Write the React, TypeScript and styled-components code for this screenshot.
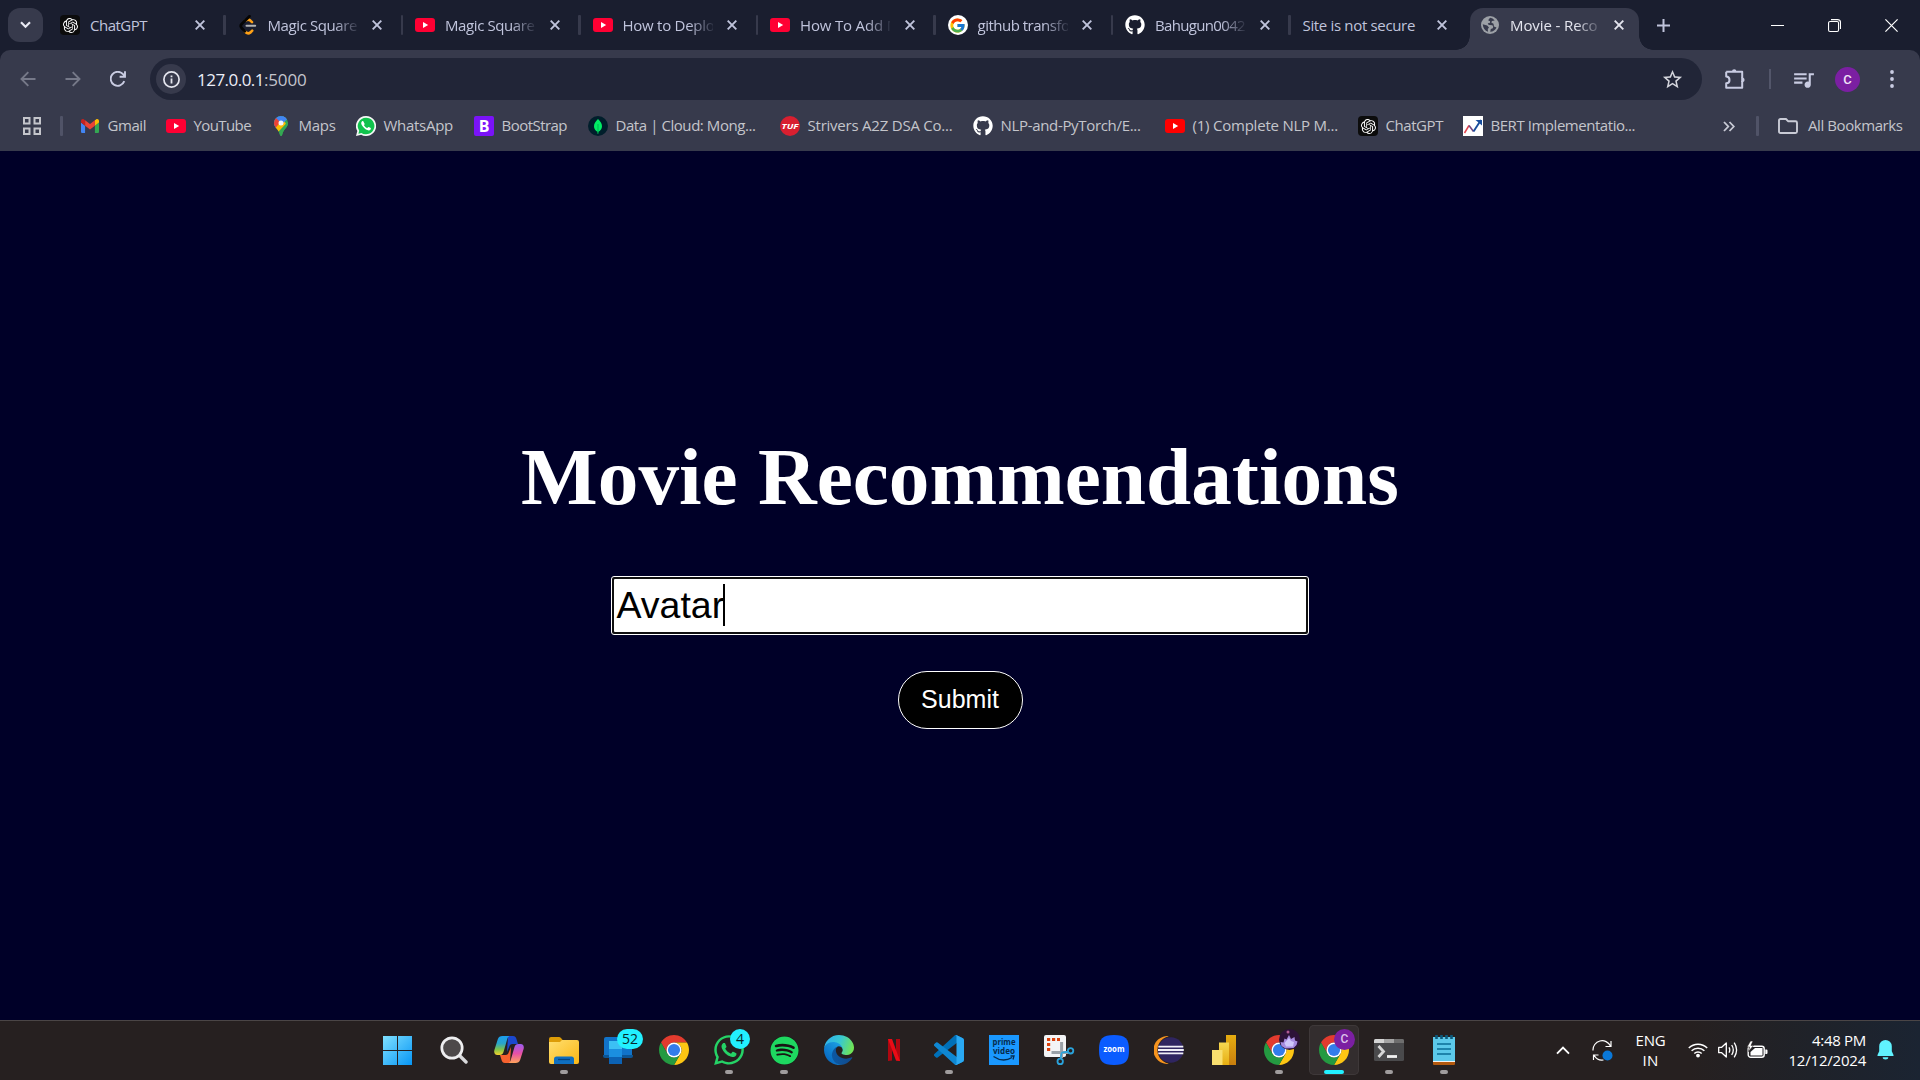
import React, { useLayoutEffect, useRef, useState } from "react";
import styled, { createGlobalStyle, css } from "styled-components";
import { SiOpenai } from "react-icons/si";
import { FaGithub, FaSpotify, FaWhatsapp } from "react-icons/fa";
import { FcGoogle } from "react-icons/fc";
import { MdQueueMusic, MdStarBorder } from "react-icons/md";

const c = {
  frame: "#1a1e2f",
  toolbar: "#373a4c",
  omnibox: "#212537",
  tabText: "#c0c4dc",
  mark: "#c4c5cb",
  page: "#000028",
  taskbar: "#262020",
  cyan: "#22f0ff",
};
const ui = `"Segoe UI", "Open Sans", "Noto Sans", sans-serif`;

const GlobalStyle = createGlobalStyle`
  *, *::before, *::after { box-sizing: border-box; }
  html, body { margin: 0; padding: 0; background: ${c.page}; overflow: hidden; }
  svg { display: block; flex: none; }
`;

/* ---------- text that spreads to a given advance width ---------- */

const Fitted = styled.span`
  display: inline-block;
  white-space: pre;
`;

function FitText({ children, width }: { children: string; width: number }) {
  const ref = useRef<HTMLSpanElement>(null);
  const [spacing, setSpacing] = useState(0);
  useLayoutEffect(() => {
    if (!ref.current) return;
    const natural = ref.current.getBoundingClientRect().width;
    setSpacing((width - natural) / children.length);
  }, [children, width]);
  return (
    <Fitted ref={ref} style={{ letterSpacing: spacing }}>
      {children}
    </Fitted>
  );
}

/* ---------- layout ---------- */

const Screen = styled.div`
  width: 1920px;
  height: 1080px;
  display: flex;
  flex-direction: column;
  font-family: ${ui};
  font-size: 15px;
  overflow: hidden;
`;

const TabStrip = styled.div`
  height: 50px;
  flex: none;
  display: flex;
  align-items: flex-end;
  background: ${c.frame};
  padding-left: 8px;
`;

const TabSearch = styled.button`
  width: 35px;
  height: 34px;
  margin: 0 4px 8px 0;
  padding: 0;
  border: 0;
  border-radius: 12px;
  background: ${c.toolbar};
  display: grid;
  place-items: center;
`;

const Tab = styled.div<{ $active?: boolean }>`
  position: relative;
  width: 177.5px;
  height: 42px;
  flex: none;
  display: flex;
  align-items: center;
  padding: 0 0 8px 13px;
  color: ${(p) => (p.$active ? "#e4e5ee" : c.tabText)};
  ${(p) =>
    p.$active
      ? css`
          width: 168.5px;
          margin-left: 3px;
          padding-left: 10px;
          background: ${c.toolbar};
          border-radius: 13px 13px 0 0;
          &::before,
          &::after {
            content: "";
            position: absolute;
            bottom: 0;
            width: 14px;
            height: 14px;
          }
          &::before {
            left: -14px;
            background: radial-gradient(circle at 0 0, transparent 13.5px, ${c.toolbar} 14px);
          }
          &::after {
            right: -14px;
            background: radial-gradient(circle at 100% 0, transparent 13.5px, ${c.toolbar} 14px);
          }
        `
      : ""}
`;

const Favicon = styled.div`
  width: 20px;
  height: 20px;
  margin-right: 10px;
  flex: none;
  display: grid;
  place-items: center;
`;

const TabTitle = styled.div<{ $wide?: boolean; $fade?: boolean }>`
  width: ${(p) => (p.$wide ? 120 : 90)}px;
  overflow: hidden;
  line-height: 22px;
  white-space: nowrap;
  ${(p) => p.$fade && css`mask-image: linear-gradient(90deg, #000 66px, rgba(0, 0, 0, 0.1) 90px);`}
`;

const TabClose = styled.div<{ $shift?: boolean }>`
  width: 14px;
  margin-left: ${(p) => (p.$shift ? 11.5 : 12.5)}px;
  display: grid;
  place-items: center;
`;

const TabDivider = styled.div`
  width: 2.5px;
  height: 20px;
  margin: 0 -1px 0 auto;
  border-radius: 1px;
  background: ${c.toolbar};
`;

const NewTab = styled.div`
  width: 50px;
  height: 50px;
  display: grid;
  place-items: center;
`;

const WindowControls = styled.div`
  margin-left: auto;
  display: flex;
  height: 50px;
  align-items: center;
`;

const WindowButton = styled.div`
  width: 57px;
  height: 49px;
  display: grid;
  place-items: center;
`;

const FrameBack = styled.div`
  background: ${c.frame};
  flex: none;
`;

const Chrome = styled.div`
  height: 101px;
  background: ${c.toolbar};
  border-radius: 10px 10px 0 0;
  display: flex;
  flex-direction: column;
  padding-top: 8px;
`;

const Toolbar = styled.div`
  height: 42px;
  display: flex;
  align-items: center;
  padding-left: 5px;
`;

const ToolButton = styled.div<{ $w?: number }>`
  width: ${(p) => p.$w ?? 45}px;
  height: 42px;
  flex: none;
  display: grid;
  place-items: center;
`;

const Omnibox = styled.div`
  width: 1552px;
  height: 42px;
  flex: none;
  margin-left: 10px;
  border-radius: 21px;
  background: ${c.omnibox};
  display: flex;
  align-items: center;
  padding: 0 15px 0 6px;
`;

const SiteInfo = styled.div`
  width: 30px;
  height: 30px;
  border-radius: 50%;
  background: ${c.toolbar};
  display: grid;
  place-items: center;
  margin-right: 11px;
`;

const Url = styled.div`
  font-size: 17px;
  line-height: 24px;
  color: #eceef8;
  margin-right: auto;
  padding-top: 1px;
`;
const Port = styled.span`
  color: #c3c4cc;
`;

const ToolDivider = styled.div`
  width: 2px;
  height: 20px;
  flex: none;
  background: #53566a;
`;

const Profile = styled.div`
  width: 25px;
  height: 25px;
  border-radius: 50%;
  background: #7b1fa2;
  color: #f2e4f7;
  font: 500 13px/25px Roboto, sans-serif;
  text-align: center;
`;

const BookmarkBar = styled.div`
  height: 51px;
  display: flex;
  align-items: center;
  padding: 1px 0 0 22px;
  color: ${c.mark};
`;

const BarDivider = styled.div`
  width: 2.5px;
  height: 20px;
  border-radius: 1px;
  background: #505367;
`;

const Bookmark = styled.div<{ $w: number }>`
  width: ${(p) => p.$w}px;
  height: 20px;
  flex: none;
  display: flex;
  align-items: center;
  gap: 7.5px;
  line-height: 20px;
`;

const BookmarkName = styled.div`
  padding-bottom: 2px;
`;

const BookmarkIcon = styled.div`
  width: 20px;
  height: 20px;
  flex: none;
  display: grid;
  place-items: center;
`;

const Disc = styled.div<{ $bg: string; $r?: string }>`
  width: 20px;
  height: 20px;
  border-radius: ${(p) => p.$r ?? "50%"};
  background: ${(p) => p.$bg};
  color: #fff;
  display: grid;
  place-items: center;
`;

const AllBookmarks = styled.div`
  margin-left: auto;
  display: flex;
  align-items: center;
  padding-right: 17.5px;
  line-height: 20px;
`;

const Page = styled.main`
  height: 869px;
  flex: none;
  background: ${c.page};
  display: flex;
  flex-direction: column;
  align-items: center;
`;

const Heading = styled.h1`
  margin: 278.7px 0 0;
  font: bold 81.25px/94px "Times New Roman", "Liberation Serif", serif;
  color: #fff;
  white-space: nowrap;
`;

const Query = styled.div`
  width: 698px;
  height: 59px;
  margin-top: 52.3px;
  border: 1px solid #fff;
  border-radius: 3px;
  background: #101010;
  padding: 2px;
  display: flex;
`;

const QueryText = styled.div`
  flex: 1;
  border-radius: 1px;
  background: #fff;
  color: #000;
  font: 37.5px/42px Arial, "Liberation Sans", sans-serif;
  padding-left: 2.5px;
  display: flex;
  align-items: center;
`;

const Caret = styled.span`
  width: 2px;
  height: 42px;
  margin-left: -1px;
  background: #000;
`;

const Submit = styled.button`
  width: 125px;
  height: 58px;
  margin: 36px 0 0 1px;
  padding: 0 1px 2px 0;
  border: 1px solid #fff;
  border-radius: 31px;
  background: #000;
  color: #fff;
  font: 25px/54px Arial, "Liberation Sans", sans-serif;
`;

const Taskbar = styled.footer`
  height: 60px;
  flex: none;
  border-top: 1px solid #4a4546;
  background: linear-gradient(90deg, ${c.taskbar} 0 1690px, #1f2229 1810px, #1b2432 1920px);
  display: flex;
  align-items: flex-start;
  padding-left: 371.5px;
  color: #fff;
`;

const TaskCell = styled.div`
  width: 55px;
  height: 58px;
  flex: none;
  display: grid;
  place-items: center;
`;

const TaskItem = styled.div<{ $active?: boolean }>`
  position: relative;
  width: 50px;
  height: 50px;
  border-radius: 5px;
  display: grid;
  place-items: center;
  ${(p) =>
    p.$active &&
    css`
      background: #332d2e;
      box-shadow: inset 0 0 0 1px #3e3839;
    `}
`;

const Running = styled.div<{ $active?: boolean }>`
  position: absolute;
  bottom: 1px;
  left: 50%;
  width: ${(p) => (p.$active ? 20 : 8)}px;
  height: 4px;
  border-radius: 2px;
  transform: translateX(-50%);
  background: ${(p) => (p.$active ? c.cyan : "#a09c9d")};
`;

const Count = styled.div<{ $w: number; $right: number }>`
  position: absolute;
  top: 4px;
  right: ${(p) => p.$right}px;
  width: ${(p) => p.$w}px;
  height: 20px;
  border-radius: 10px;
  background: ${c.cyan};
  color: #06282c;
  font-size: 14px;
  line-height: 20px;
  text-align: center;
`;

const Badge = styled.div<{ $bg: string }>`
  position: absolute;
  top: 4px;
  right: 4px;
  width: 21px;
  height: 21px;
  border-radius: 50%;
  background: ${(p) => p.$bg};
  color: #dcc2ea;
  font: 500 12px/21px Roboto, sans-serif;
  text-align: center;
`;

const Tray = styled.div`
  margin-left: auto;
  height: 58px;
  display: flex;
  align-items: center;
`;

const TraySlot = styled.div<{ $w: number }>`
  width: ${(p) => p.$w}px;
  display: grid;
  place-items: center;
`;

const Lines = styled.div<{ $w: number; $align: string }>`
  width: ${(p) => p.$w}px;
  line-height: 20px;
  padding-bottom: 1px;
  display: flex;
  flex-direction: column;
  align-items: ${(p) => p.$align};
`;

/* ---------- icons ---------- */

const YouTube = ({ fill = "#ff0033" }: { fill?: string }) => (
  <svg width="20" height="14" viewBox="0 0 20 14">
    <rect width="20" height="14" rx="3" fill={fill} />
    <path d="M8 4l5.2 3L8 10z" fill="#fff" />
  </svg>
);

const OpenAI = () => (
  <Disc $bg="#0c0c0c" $r="4px">
    <SiOpenai size={15} />
  </Disc>
);

const LeetCode = () => (
  <svg width="18" height="20" viewBox="0 0 18 20" fill="none" strokeLinecap="round">
    <path d="M6.800 5.400q2.400-1.700 4.600.2l1.600 1.500M5.800 16.400q2.800 3.200 5.700 1l1.700-1.700" stroke="#ffa116" strokeWidth="2.600" />
    <path d="M10.500 1.200L2.500 9.300q-1.600 1.700 0 3.400l3.300 3.600" stroke="#050505" strokeWidth="2.700" />
    <path d="M7.500 10.800h8.700" stroke="#b3b3b3" strokeWidth="2" />
  </svg>
);

const Google = () => (
  <Disc $bg="#fff">
    <FcGoogle size={17} />
  </Disc>
);

const Globe = () => (
  <svg width="18" height="18" viewBox="0 0 18 18">
    <circle cx="9" cy="9" r="9" fill="#9ca0a6" />
    <path d="M9.300 1.800q-1.800 1-2 2.800l1.800.6-.3 1.800-2 .3q0 1.400 1.600 1.700l3 .2q1.500 1.300.4 3l-2 .8-.6 2.800q4.500-.6 6.300-4.400l-2.500-1-.5-2.600-2.200-1.300.7-1.600 2.700-.5q-2-2.400-4.400-2.600z" fill={c.toolbar} />
    <path d="M1.700 8.200l4.500 1.200 1.800 2-1.200 1.500.2 2.900Q2.300 14 1.700 8.200z" fill={c.toolbar} />
  </svg>
);

const Cross = ({ color = c.tabText }: { color?: string }) => (
  <svg width="10" height="10" viewBox="0 0 10 10" stroke={color} strokeWidth="1.9">
    <path d="M.7.7l8.6 8.6M9.3.7L.7 9.3" />
  </svg>
);

const Gmail = () => (
  <svg width="18" height="14" viewBox="52 42 88 66" preserveAspectRatio="none">
    <path fill="#4285f4" d="M58 108h14V74L52 59v43c0 3.32 2.69 6 6 6" />
    <path fill="#34a853" d="M120 108h14c3.32 0 6-2.69 6-6V59l-20 15" />
    <path fill="#fbbc04" d="M120 48v26l20-15v-8c0-7.42-8.47-11.65-14.4-7.2" />
    <path fill="#ea4335" d="M72 74V48l24 18 24-18v26L96 92" />
    <path fill="#c5221f" d="M52 51v8l20 15V48l-5.6-4.2c-5.94-4.45-14.4-.22-14.4 7.2" />
  </svg>
);

const Maps = () => (
  <svg width="14" height="20" viewBox="0 0 14 20">
    <clipPath id="pin">
      <path d="M7 0a7 7 0 0 1 7 7c0 4-3.4 5.600-5 9.200-.7 1.600-.8 3.800-2 3.800s-1.300-2.200-2-3.800C3.400 12.600 0 11 0 7a7 7 0 0 1 7-7z" />
    </clipPath>
    <g clipPath="url(#pin)">
      <path d="M0 0h14v20H0z" fill="#34a853" />
      <path d="M0 14L12.500 1 7 0H0z" fill="#4285f4" />
      <path d="M0 3.200L2 2l5 4.800L1 13 0 10z" fill="#ea4335" />
      <path d="M1 12.400L9.200 3 12 8 4 16z" fill="#fbbc04" />
      <path d="M14 5.500L4.500 16.500 7 20h7z" fill="#34a853" />
      <path d="M4.600 4.400L9.500-1l4 4-4.500 4z" fill="#4285f4" />
    </g>
    <circle cx="7" cy="7" r="2.500" fill="#f4f6fb" />
  </svg>
);

const WhatsAppMark = () => (
  <svg width="20" height="20" viewBox="0 0 20 20">
    <path d="M10 0a10 10 0 1 1-4.800 18.700L0 20l1.300-5A10 10 0 0 1 10 0z" fill="#f4f7f5" />
    <path d="M10 1.700a8.300 8.300 0 1 1-4.500 15.200l-3.100.8.800-3A8.300 8.300 0 0 1 10 1.700z" fill="#10c24c" />
    <path d="M7.300 5.300c-.5-.5-1.300-.3-1.800.6-.6 1.100-.3 2.700 1.500 4.900 1.900 2.300 4.200 3.700 5.900 3.600 1.200-.1 2-1 2-1.900 0-.4-1.900-1.500-2.400-1.400-.5.100-.9 1.100-1.300 1-.9-.2-2.800-1.900-3.200-2.900-.1-.4.700-.9.700-1.300z" fill="#fff" />
  </svg>
);

const Mongo = () => (
  <Disc $bg="#001e2b">
    <svg width="8" height="15" viewBox="0 0 8 15">
      <path d="M4 0c2.300 2.700 4 4.300 4 7.200 0 2.600-1.500 4.200-3.500 5.600L4.200 15h-.5l-.3-2.200C1.400 11.400 0 9.800 0 7.200 0 4.300 1.700 2.700 4 0z" fill="#00ed64" />
      <path d="M4 5v8" stroke="#00984a" strokeWidth=".7" />
    </svg>
  </Disc>
);

const Trend = () => (
  <Disc $bg="#fff" $r="0">
    <svg width="20" height="20" viewBox="0 0 20 20" fill="none">
      <path d="M1.500 17L6 9.500" stroke="#e2444d" strokeWidth="1.500" />
      <path d="M6 9.500l4.500 6" stroke="#70457e" strokeWidth="1.500" />
      <path d="M10.500 15.500L18 4" stroke="#184d9c" strokeWidth="1.900" />
      <path d="M12.500 4H19v5.500z" fill="#184d9c" />
    </svg>
  </Disc>
);

const MicroText = styled.text`
  font-family: "Open Sans", "Noto Sans", sans-serif;
  font-weight: 700;
  text-anchor: middle;
`;

const Tuf = () => (
  <svg width="20" height="20" viewBox="0 0 20 20">
    <circle cx="10" cy="10" r="10" fill="#d81f30" />
    <MicroText x="10" y="12.500" fontSize="7.500" fontStyle="italic" fill="#fff" textLength="17" lengthAdjust="spacingAndGlyphs">
      TUF
    </MicroText>
  </svg>
);

const Bootstrap = () => (
  <svg width="20" height="20" viewBox="0 0 20 20">
    <rect width="20" height="20" rx="2" fill="#7a13f8" />
    <MicroText x="10" y="15.500" fontSize="16" fill="#fff">
      B
    </MicroText>
  </svg>
);

const ChromeLogo = () => (
  <svg width="30" height="30" viewBox="0 0 48 48">
    <path fill="#e33b2e" d="M24 0C15.100 0 7.360 4.830 3.215 12L13.607 30A11.980 11.980 0 0 1 12 24 12 12 0 0 1 24 12h20.785C40.630 4.830 32.880 0 24 0Z" />
    <path fill="#fdc613" d="M44.780 12H24a12 12 0 0 1 10.392 18L24 48c13.250 0 24-10.740 24-24 0-4.370-1.170-8.470-3.220-12Z" />
    <path fill="#249a41" d="M3.215 12C1.170 15.530 0 19.630 0 24c0 13.250 10.740 24 24 24L34.390 30A12 12 0 0 1 13.607 30Z" />
    <circle cx="24" cy="24" r="12" fill="#fff" />
    <circle cx="24" cy="24" r="9.700" fill="#327ceb" />
  </svg>
);

const WindowsLogo = () => (
  <svg width="32" height="29" viewBox="0 0 32 29">
    <defs>
      <linearGradient id="win" x1="0" y1="0" x2="1" y2="1">
        <stop offset="0" stopColor="#7fe0ff" />
        <stop offset="1" stopColor="#0796f5" />
      </linearGradient>
    </defs>
    <path fill="url(#win)" d="M0 0h14v14H0zM15 0h14v14H15zM0 15h14v14H0zM15 15h14v14H15z" />
  </svg>
);

const SearchIcon = () => (
  <svg width="28" height="28" viewBox="0 0 28 28">
    <path d="M18 18l8 8" stroke="#d9d9dc" strokeWidth="3.400" strokeLinecap="round" />
    <circle cx="12" cy="12" r="10.200" fill="#4d494a" stroke="#eeeef0" strokeWidth="2.700" />
  </svg>
);

const Copilot = () => (
  <svg width="30" height="28" viewBox="0 0 30 28">
    <defs>
      <linearGradient id="cpA" x1="0" y1="0" x2="0" y2="1">
        <stop offset="0" stopColor="#1a9df0" />
        <stop offset=".4" stopColor="#2aa6c8" />
        <stop offset=".7" stopColor="#7dc34a" />
        <stop offset="1" stopColor="#f3d02c" />
      </linearGradient>
      <linearGradient id="cpB" x1="0" y1="0" x2="0" y2="1">
        <stop offset="0" stopColor="#9a5cf0" />
        <stop offset=".5" stopColor="#e850a6" />
        <stop offset="1" stopColor="#ffa45c" />
      </linearGradient>
    </defs>
    <path d="M14 0h5c2.300 0 3 1.500 3.600 3.500L24 8h-5.500c-2 0-2.800 1-3.400 3L13 16z" fill="#1b48ce" />
    <path d="M16 27h-5c-2.300 0-3-1.500-3.600-3.500L6 19h5.500c2 0 2.800-1 3.400-3L17 11z" fill="#f6612e" />
    <path d="M8.500 0h8c-2 0-2.800 1.500-3.300 3.300L9.800 15c-.7 2.600-1.600 4-4.300 4H3.400C.6 19-.3 16.500.4 14L3.800 3.300C4.600 1 6 0 8.500 0z" fill="url(#cpA)" />
    <path d="M21.500 27h-8c2 0 2.800-1.500 3.300-3.300L20.200 12c.7-2.600 1.600-4 4.300-4h2.100c2.800 0 3.700 2.500 3 5l-3.400 10.700C25.400 26 24 27 21.500 27z" fill="url(#cpB)" />
  </svg>
);

const Explorer = () => (
  <svg width="30" height="27" viewBox="0 0 30 27">
    <defs>
      <linearGradient id="fold" x1="0" y1="0" x2="1" y2="1">
        <stop offset="0" stopColor="#ffdf70" />
        <stop offset="1" stopColor="#fbb714" />
      </linearGradient>
    </defs>
    <path d="M0 2q0-2 2-2h8q1 0 2 1l2 2.500V8H0z" fill="#dd9c07" />
    <path d="M0 5h11l2-2h15q2 0 2 2v20q0 2-2 2H2q-2 0-2-2z" fill="url(#fold)" />
    <path d="M5 27v-5q0-2.500 2.500-2.500h15Q25 19.500 25 22v5z" fill="#0f6fc0" />
    <path d="M9 22.500h12" stroke="#07457e" strokeWidth="1.300" />
  </svg>
);

const PhoneLink = () => (
  <svg width="32" height="28" viewBox="0 0 32 28">
    <path d="M3 1h24q2 0 2 2v16H1V3q0-2 2-2z" fill="#1173c9" />
    <path d="M0 19h30v1q0 2-2 2H2q-2 0-2-2z" fill="#0c5595" />
    <path d="M6 5h13v8H6z" fill="#3cc0f4" />
    <path d="M6 13h13v8H6z" fill="#1b8fe0" />
    <path d="M6 21h13v7H6z" fill="#0c62b4" />
  </svg>
);

const Edge = () => (
  <svg width="30" height="30" viewBox="0 0 256 256">
    <defs>
      <linearGradient id="edA" x1="63" y1="177" x2="242" y2="177" gradientUnits="userSpaceOnUse">
        <stop offset="0" stopColor="#0c59a4" />
        <stop offset="1" stopColor="#114a8b" />
      </linearGradient>
      <linearGradient id="edB" x1="157" y1="100" x2="46" y2="221" gradientUnits="userSpaceOnUse">
        <stop offset="0" stopColor="#1b9de2" />
        <stop offset=".6" stopColor="#0f7fd0" />
        <stop offset="1" stopColor="#0a6cc2" />
      </linearGradient>
      <linearGradient id="edC" x1="20" y1="40" x2="240" y2="120" gradientUnits="userSpaceOnUse">
        <stop offset="0" stopColor="#2fb3ea" />
        <stop offset=".5" stopColor="#38c8d0" />
        <stop offset="1" stopColor="#70e456" />
      </linearGradient>
    </defs>
    <path fill="url(#edA)" d="M235.680 190.460a93.730 93.730 0 0 1-10.540 4.710 101.870 101.870 0 0 1-35.900 6.460c-47.320 0-88.540-32.550-88.540-74.320A31.480 31.480 0 0 1 117.130 100.030c-42.800 1.800-53.800 46.400-53.800 72.530 0 73.880 68.090 81.370 82.760 81.370 7.910 0 19.840-2.300 27-4.560l1.310-.44a128.340 128.340 0 0 0 66.600-52.800 4 4 0 0 0-5.320-5.670z" />
    <path fill="url(#edB)" d="M105.730 241.420A79.200 79.200 0 0 1 83 220.100a80.720 80.720 0 0 1 29.530-120c3.120-1.470 8.450-4.130 15.540-4a32.350 32.350 0 0 1 25.690 13 31.880 31.880 0 0 1 6.360 18.660c0-.21 24.460-79.600-80-79.600-43.900 0-80 41.660-80 78.210a130.150 130.150 0 0 0 12.110 56 128 128 0 0 0 156.380 67.110 75.550 75.550 0 0 1-62.780-8z" />
    <path fill="url(#edC)" d="M152.330 148.860c-.81 1.050-3.300 2.500-3.300 5.660 0 2.610 1.700 5.120 4.720 7.230 14.380 10 41.490 8.680 41.560 8.680a59.560 59.560 0 0 0 30.270-8.350A61.380 61.380 0 0 0 256 109.190c.26-22.410-8-37.310-11.340-43.910C223.460 23.840 177.720 0 128 0A128 128 0 0 0 0 126.200c.48-36.540 36.800-66.050 80-66.050 3.500 0 23.460.34 42 10.070 16.340 8.580 24.900 18.940 30.850 29.210 6.180 10.670 7.280 24.150 7.280 29.520s-2.740 13.330-7.800 19.910z" />
  </svg>
);

const Netflix = () => (
  <svg width="12" height="22" viewBox="0 0 12 22">
    <path d="M0 0h4v21.500l-4 .5zM8 0h4v22l-4-.5z" fill="#b00710" />
    <path d="M0 0h4l8 22-4-.5z" fill="#ec0b16" />
  </svg>
);

const VSCode = () => (
  <svg width="30" height="30" viewBox="0 0 100 100">
    <path d="M96.500 10.700L75.900.8a6.200 6.200 0 0 0-7.100 1.200L1.300 63.500a4.200 4.200 0 0 0 0 6.200l5.500 5a4.200 4.200 0 0 0 5.400.2l81.200-61.600c2.700-2 6.600-.1 6.600 3.300v-.2a6.300 6.300 0 0 0-3.500-5.700z" fill="#0070b8" />
    <path d="M96.500 89.300l-20.600 9.900a6.200 6.200 0 0 1-7.100-1.200L1.300 36.500a4.200 4.200 0 0 1 0-6.200l5.500-5a4.200 4.200 0 0 1 5.400-.2l81.200 61.600c2.700 2 6.600.1 6.600-3.300v.2a6.300 6.300 0 0 1-3.500 5.700z" fill="#0f87d2" />
    <path d="M75.900 99.100a6.200 6.200 0 0 1-7.100-1.200c2.300 2.300 6.200.7 6.200-2.600V4.700c0-3.300-3.900-4.900-6.200-2.600A6.200 6.200 0 0 1 75.900.9l20.600 9.900a6.200 6.200 0 0 1 3.500 5.600v67.200a6.200 6.200 0 0 1-3.500 5.600z" fill="#2aa9f3" />
  </svg>
);

const PrimeVideo = () => (
  <svg width="30" height="30" viewBox="0 0 30 30">
    <rect width="30" height="30" fill="#1a98ff" />
    <MicroText x="15" y="9.500" fontSize="8.200" fill="#062b4d" textLength="23" lengthAdjust="spacingAndGlyphs">
      prime
    </MicroText>
    <MicroText x="15" y="19" fontSize="8.200" fill="#062b4d" textLength="22" lengthAdjust="spacingAndGlyphs">
      video
    </MicroText>
    <path d="M4.500 21.500q9.500 6.500 18.500 1M21.500 21h3.500l-1 3.500" fill="none" stroke="#062b4d" strokeWidth="1.300" />
  </svg>
);

const Snip = () => (
  <svg width="31" height="30" viewBox="0 0 31 30">
    <rect width="22" height="22" rx="2" fill="#f3f4f6" />
    <path d="M3 3h3.200v3H3zM8 3h3.200v3H8zM13 3h3v3h-3zM3 8h3.200v3H3zM3 13h3.200v3H3z" fill="#d9400b" />
    <path d="M17.600 7v16M7.500 17.600h17" stroke="#9aa1a8" strokeWidth="3" fill="none" />
    <path d="M17.600 17.600l-1 6M17.600 17.600l7-1" stroke="#2aa3dc" strokeWidth="1.600" />
    <circle cx="26.600" cy="15.800" r="2.700" fill="none" stroke="#2aa3dc" strokeWidth="1.800" />
    <circle cx="16.200" cy="26.400" r="2.700" fill="none" stroke="#2aa3dc" strokeWidth="1.800" />
  </svg>
);

const Zoom = () => (
  <svg width="30" height="30" viewBox="0 0 30 30">
    <path d="M15 0c11.500 0 15 3.500 15 15s-3.500 15-15 15S0 26.500 0 15 3.500 0 15 0z" fill="#0b5cff" />
    <MicroText x="15" y="17.200" fontSize="8" fill="#fff" textLength="21" lengthAdjust="spacingAndGlyphs">
      zoom
    </MicroText>
  </svg>
);

const Eclipse = () => (
  <svg width="30" height="28" viewBox="0 0 30 28">
    <path d="M15 .2A13.900 13.900 0 1 0 15 27.800 14.500 14.500 0 0 1 15 .2z" fill="#f7941e" />
    <circle cx="17.200" cy="14" r="13.800" fill={c.taskbar} />
    <circle cx="16.800" cy="14" r="12.800" fill="#2f2560" />
    <path d="M4.300 10.600h25M4 14h25.800M4.300 17.400h25" stroke="#f1f0f7" strokeWidth="1.900" />
  </svg>
);

const PowerBI = () => (
  <svg width="24" height="30" viewBox="0 0 24 30">
    <defs>
      <linearGradient id="pbA" x1="0" y1="0" x2="0" y2="1">
        <stop offset="0" stopColor="#e6ad10" />
        <stop offset="1" stopColor="#c87e0e" />
      </linearGradient>
      <linearGradient id="pbB" x1="0" y1="0" x2="0" y2="1">
        <stop offset="0" stopColor="#f6d751" />
        <stop offset="1" stopColor="#e6ad10" />
      </linearGradient>
    </defs>
    <path d="M14 0h10v30H14z" fill="url(#pbA)" />
    <path d="M7 7.500h10V30H7z" fill="url(#pbB)" />
    <path d="M0 15h10.500v15H0z" fill="#f9df6f" />
  </svg>
);

const Terminal = () => (
  <svg width="30" height="22" viewBox="0 0 30 22">
    <rect width="30" height="22" rx="1.500" fill="#4a4a4c" />
    <path d="M0 4V1.500Q0 0 1.500 0H10v4z" fill="#d4d4d4" />
    <path d="M10 0h10v4H10z" fill="#a4a4a4" />
    <path d="M20 0h8.500Q30 0 30 1.500V4H20z" fill="#6e6e6e" />
    <path d="M4.500 7l5 5.500-5 5.500" fill="none" stroke="#d6d6d6" strokeWidth="2.800" />
    <path d="M13 17.500h10" stroke="#f2f2f2" strokeWidth="2.800" />
  </svg>
);

const Notepad = () => (
  <svg width="22" height="30" viewBox="0 0 22 30">
    <path d="M0 26h22v3q0 1-1 1H1q-1 0-1-1z" fill="#b3590e" />
    <path d="M0 24h22v3H0z" fill="#f2f2f2" />
    <path d="M0 2h22v24H0z" fill="#5cc9ea" />
    <path d="M4 9h14M4 14h14M4 19h14" stroke="#0a6d97" strokeWidth="1.700" />
    <path d="M3.500 0v4M8.500 0v4M13.500 0v4M18.500 0v4" stroke="#0c5a7c" strokeWidth="2.600" />
  </svg>
);

const BackDot = styled.div<{ $s: number; $bg: string; $color: string }>`
  width: ${(p) => p.$s}px;
  height: ${(p) => p.$s}px;
  border-radius: 50%;
  background: ${(p) => p.$bg};
  color: ${(p) => p.$color};
  display: grid;
  place-items: center;
`;

const FlameAvatar = () => (
  <svg width="21" height="21" viewBox="0 0 21 21">
    <circle cx="10.500" cy="10.500" r="10.500" fill="#2d1238" />
    <path d="M10 6l2 4 3.500-2 .5 3.500 2.500 1-1 3.500-3 3-8 .5-4-2.500-1-4 3 .5 1-4 2 1z" fill="#a78be0" />
    <path d="M10 9l2 3 3 1-1 4.500H7l-1.500-3.500z" fill="#cfc6fb" />
    <circle cx="9" cy="3" r="1.500" fill="#b05a92" />
  </svg>
);

/* ---------- data ---------- */

type TabInfo = { title: string; width: number; icon?: React.ReactNode; fade?: boolean };
const tabs: TabInfo[] = [
  { title: "ChatGPT", width: 57, icon: <OpenAI /> },
  { title: "Magic Square", width: 89.5, icon: <LeetCode />, fade: true },
  { title: "Magic Square", width: 89.5, icon: <YouTube />, fade: true },
  { title: "How to Deplo", width: 92, icon: <YouTube />, fade: true },
  { title: "How To Add M", width: 100, icon: <YouTube />, fade: true },
  { title: "github transfo", width: 92, icon: <Google />, fade: true },
  { title: "Bahugun0042", width: 90, icon: <FaGithub size={20} color="#fff" />, fade: true },
  { title: "Site is not secure", width: 112.5 },
];

const bookmarks = [
  { name: "Gmail", text: 38.5, w: 86, icon: <Gmail /> },
  { name: "YouTube", text: 57.5, w: 105, icon: <YouTube /> },
  { name: "Maps", text: 37, w: 85, icon: <Maps /> },
  { name: "WhatsApp", text: 69.5, w: 118, icon: <WhatsAppMark /> },
  { name: "BootStrap", text: 65.5, w: 114, icon: <Bootstrap /> },
  { name: "Data | Cloud: Mong...", text: 140, w: 192, icon: <Mongo /> },
  { name: "Strivers A2Z DSA Co...", text: 145, w: 193, icon: <Tuf /> },
  { name: "NLP-and-PyTorch/E...", text: 140, w: 192, icon: <FaGithub size={20} color="#fff" /> },
  { name: "(1) Complete NLP M...", text: 145.5, w: 193, icon: <YouTube fill="#ff0000" /> },
  { name: "ChatGPT", text: 57.5, w: 105, icon: <OpenAI /> },
  { name: "BERT Implementatio...", text: 144.5, w: 180, icon: <Trend /> },
];

type App = { icon: React.ReactNode; running?: boolean; active?: boolean; extra?: React.ReactNode };
const apps: App[] = [
  { icon: <WindowsLogo /> },
  { icon: <SearchIcon /> },
  { icon: <Copilot /> },
  { icon: <Explorer />, running: true },
  { icon: <PhoneLink />, extra: <Count $w={26} $right={1}>52</Count> },
  { icon: <ChromeLogo /> },
  { icon: <FaWhatsapp size={34} color="#25d366" />, running: true, extra: <Count $w={20} $right={4}>4</Count> },
  {
    icon: (
      <BackDot $s={29} $bg="#191414" $color="#1ed760">
        <FaSpotify size={29} />
      </BackDot>
    ),
    running: true,
  },
  { icon: <Edge /> },
  { icon: <Netflix /> },
  { icon: <VSCode />, running: true },
  { icon: <PrimeVideo /> },
  { icon: <Snip /> },
  { icon: <Zoom /> },
  { icon: <Eclipse /> },
  { icon: <PowerBI /> },
  { icon: <ChromeLogo />, running: true, extra: <Badge $bg="transparent"><FlameAvatar /></Badge> },
  { icon: <ChromeLogo />, running: true, active: true, extra: <Badge $bg="#7b1fa2">C</Badge> },
  { icon: <Terminal />, running: true },
  { icon: <Notepad />, running: true },
];

/* ---------- screen ---------- */

export default function App() {
  return (
    <Screen>
      <GlobalStyle />
      <TabStrip>
        <TabSearch>
          <svg width="11" height="8" viewBox="0 0 11 8" fill="none" stroke="#e8e9f3" strokeWidth="2.200">
            <path d="M1 1.200l4.500 4.500L10 1.200" />
          </svg>
        </TabSearch>
        {tabs.map((t, i) => (
          <Tab key={i}>
            {t.icon && <Favicon>{t.icon}</Favicon>}
            <TabTitle $wide={!t.icon} $fade={t.fade}>
              <FitText width={t.width}>{t.title}</FitText>
            </TabTitle>
            <TabClose>
              <Cross />
            </TabClose>
            {i < tabs.length - 1 && <TabDivider />}
          </Tab>
        ))}
        <Tab $active>
          <Favicon>
            <Globe />
          </Favicon>
          <TabTitle $fade>
            <FitText width={87.5}>Movie - Reco</FitText>
          </TabTitle>
          <TabClose $shift>
            <Cross color="#e4e5ee" />
          </TabClose>
        </Tab>
        <NewTab>
          <svg width="13" height="13" viewBox="0 0 13 13" stroke={c.tabText} strokeWidth="2">
            <path d="M6.500 0v13M0 6.500h13" />
          </svg>
        </NewTab>
        <WindowControls>
          <WindowButton>
            <svg width="13" height="13" viewBox="0 0 13 13">
              <path d="M0 6h13v1H0z" fill="#fff" />
            </svg>
          </WindowButton>
          <WindowButton>
            <svg width="13" height="13" viewBox="0 0 13 13" fill="none" stroke="#fff" strokeWidth="1.100">
              <rect x=".55" y="2.550" width="10" height="9.900" rx="1.500" />
              <path d="M3 .6h6.500q3 0 3 3V10" />
            </svg>
          </WindowButton>
          <WindowButton>
            <svg width="13" height="13" viewBox="0 0 13 13" stroke="#fff" strokeWidth="1.200">
              <path d="M.4.4l12.200 12.200M12.600.4L.4 12.600" />
            </svg>
          </WindowButton>
        </WindowControls>
      </TabStrip>

      <FrameBack>
        <Chrome>
          <Toolbar>
            <ToolButton>
              <svg width="16" height="16" viewBox="0 0 16 16" fill="none" stroke="#767989" strokeWidth="1.900">
                <path d="M15.500 8H1.800M8.300 1.200L1.500 8l6.800 6.800" />
              </svg>
            </ToolButton>
            <ToolButton>
              <svg width="16" height="16" viewBox="0 0 16 16" fill="none" stroke="#767989" strokeWidth="1.900">
                <path d="M.5 8h13.700M7.700 1.200L14.500 8l-6.800 6.800" />
              </svg>
            </ToolButton>
            <ToolButton>
              <svg width="16" height="16" viewBox="0 0 16 16" fill="none" stroke="#c9cce2" strokeWidth="1.900">
                <path d="M14.300 10.200A7 7 0 1 1 13 3.200l1.500 1.800M15 .3v5.400H9.600" />
              </svg>
            </ToolButton>
            <Omnibox>
              <SiteInfo>
                <svg width="17" height="17" viewBox="0 0 17 17" fill="none" stroke="#e4e5ee">
                  <circle cx="8.500" cy="8.500" r="7.600" strokeWidth="1.700" />
                  <path d="M8.500 7.600v4.800M8.500 4.500v1.800" strokeWidth="1.800" />
                </svg>
              </SiteInfo>
              <Url>
                <FitText width={67}>127.0.0.1</FitText>
                <Port>
                  <FitText width={42.5}>:5000</FitText>
                </Port>
              </Url>
              <ToolButton $w={29}>
                <MdStarBorder size={23} color="#d4d5dc" />
              </ToolButton>
            </Omnibox>
            <ToolButton $w={67}>
              <svg width="21" height="20" viewBox="0 0 21 20" fill="none" stroke="#c9cce2" strokeWidth="2" strokeLinejoin="round">
                <path d="M1.200 2.800h16v5.600M17.200 12v6.800h-16v-4.500q3.300 0 3.300-3.300T1.200 7.600V2.800" />
                <path d="M17.200 8v5" />
                <path d="M7 2.500a2.200 2.200 0 0 1 4.400 0zM17.500 8.800a2.100 2.100 0 0 1 0 4.200z" fill="#c9cce2" stroke="none" />
              </svg>
            </ToolButton>
            <ToolDivider />
            <ToolButton $w={64}>
              <MdQueueMusic size={25} color="#c9cce2" />
            </ToolButton>
            <ToolButton $w={25}>
              <Profile>C</Profile>
            </ToolButton>
            <ToolButton $w={64}>
              <svg width="4" height="18" viewBox="0 0 4 18" fill="#c9cce2">
                <circle cx="2" cy="2" r="1.900" />
                <circle cx="2" cy="9" r="1.900" />
                <circle cx="2" cy="16" r="1.900" />
              </svg>
            </ToolButton>
          </Toolbar>
          <BookmarkBar>
            <Bookmark $w={38}>
              <BookmarkIcon>
                <svg width="18" height="18" viewBox="0 0 18 18" fill="none" stroke="#c4c5cb" strokeWidth="2">
                  <path d="M1 1h5.500v5.500H1zM11.500 1H17v5.500h-5.500zM1 11.500h5.500V17H1zM11.500 11.500H17V17h-5.500z" />
                </svg>
              </BookmarkIcon>
            </Bookmark>
            <Bookmark $w={20}>
              <BarDivider />
            </Bookmark>
            {bookmarks.map((b, i) => (
              <Bookmark key={i} $w={b.w}>
                <BookmarkIcon>{b.icon}</BookmarkIcon>
                <BookmarkName>
                  <FitText width={b.text}>{b.name}</FitText>
                </BookmarkName>
              </Bookmark>
            ))}
            <AllBookmarks>
              <Bookmark $w={33.5}>
                <svg width="12" height="11" viewBox="0 0 12 11" fill="none" stroke="#c9cbd6" strokeWidth="1.800">
                  <path d="M1 1l4.300 4.500L1 10M6.500 1l4.300 4.500L6.500 10" />
                </svg>
              </Bookmark>
              <Bookmark $w={22}>
                <BarDivider />
              </Bookmark>
              <Bookmark $w={30}>
                <svg width="20" height="16" viewBox="0 0 20 16" fill="none" stroke="#c9cbd6" strokeWidth="1.900" strokeLinejoin="round">
                  <path d="M1 2.500Q1 1 2.500 1H8l2 2.200h7.500q1.500 0 1.500 1.500v8.800q0 1.500-1.500 1.500h-15Q1 15 1 13.500z" />
                </svg>
              </Bookmark>
              <BookmarkName>
                <FitText width={94.5}>All Bookmarks</FitText>
              </BookmarkName>
            </AllBookmarks>
          </BookmarkBar>
        </Chrome>
      </FrameBack>

      <Page>
        <Heading>Movie Recommendations</Heading>
        <Query>
          <QueryText>
            Avatar
            <Caret />
          </QueryText>
        </Query>
        <Submit>Submit</Submit>
      </Page>

      <Taskbar>
        {apps.map((a, i) => (
          <TaskCell key={i}>
            <TaskItem $active={a.active}>
              {a.icon}
              {a.extra}
              {a.running && <Running $active={a.active} />}
            </TaskItem>
          </TaskCell>
        ))}
        <Tray>
          <TraySlot $w={40}>
            <svg width="14" height="9" viewBox="0 0 14 9" fill="none" stroke="#fff" strokeWidth="1.900">
              <path d="M1 7.700l6-6 6 6" />
            </svg>
          </TraySlot>
          <TraySlot $w={40}>
            <svg width="21" height="21" viewBox="0 0 21 21" fill="none" stroke="#fff" strokeWidth="1.200">
              <path d="M1 10.500A9.200 9.200 0 0 1 18.500 6M19 1v5.500h-5.500M11.500 20A9 9 0 0 1 2.300 15.500M1.500 20v-5H6.500" />
              <circle cx="15.500" cy="15.500" r="5" fill="#0a78d8" stroke="none" />
            </svg>
          </TraySlot>
          <Lines $w={56} $align="center">
            <FitText width={30}>ENG</FitText>
            <FitText width={16}>IN</FitText>
          </Lines>
          <TraySlot $w={38}>
            <svg width="20" height="16" viewBox="0 0 20 16" fill="none" stroke="#fff" strokeWidth="1.500">
              <path d="M.8 6a13 13 0 0 1 18.400 0M3.600 8.800a9 9 0 0 1 12.800 0M6.300 11.500a5.300 5.300 0 0 1 7.400 0" />
              <circle cx="10" cy="13.600" r="1.900" fill="#fff" stroke="none" />
            </svg>
          </TraySlot>
          <TraySlot $w={22}>
            <svg width="20" height="18" viewBox="0 0 20 18" fill="none" stroke="#fff" strokeWidth="1.300">
              <path d="M.7 6.300h3L8.300 2v14l-4.600-4.300h-3z" strokeLinejoin="round" />
              <path d="M11 6.300q1.600 2.700 0 5.400M13.700 4q3.200 5 0 10M16.200 1.700q4.800 7.300 0 14.600" />
            </svg>
          </TraySlot>
          <TraySlot $w={38}>
            <svg width="21" height="18" viewBox="0 0 21 18">
              <rect x="1.200" y="5.200" width="16" height="11" rx="2.500" fill="none" stroke="#fff" strokeWidth="1.400" />
              <path d="M8 7h7.500v7.500H3.500V11zM18.300 8.500h1.200q1 0 1 1v2.500q0 1-1 1h-1.200z" fill="#fff" />
              <path d="M3.500 0L0 6h2.500L1.500 10.500 6.500 4.500H4L6 0z" fill="#fff" stroke={c.taskbar} strokeWidth=".6" />
            </svg>
          </TraySlot>
          <Lines $w={89.5} $align="flex-end">
            <FitText width={54}>4:48 PM</FitText>
            <FitText width={77.5}>12/12/2024</FitText>
          </Lines>
          <TraySlot $w={39}>
            <svg width="17" height="20" viewBox="0 0 17 20" fill="#60f3ff">
              <path d="M8.500 0a6.300 6.300 0 0 1 6.300 6.300v5L16.500 15v1H.5v-1l1.700-3.700v-5A6.300 6.300 0 0 1 8.500 0zM5.700 17.200h5.600a2.800 2.200 0 0 1-5.600 0z" />
            </svg>
          </TraySlot>
          <TraySlot $w={15} />
        </Tray>
      </Taskbar>
    </Screen>
  );
}
